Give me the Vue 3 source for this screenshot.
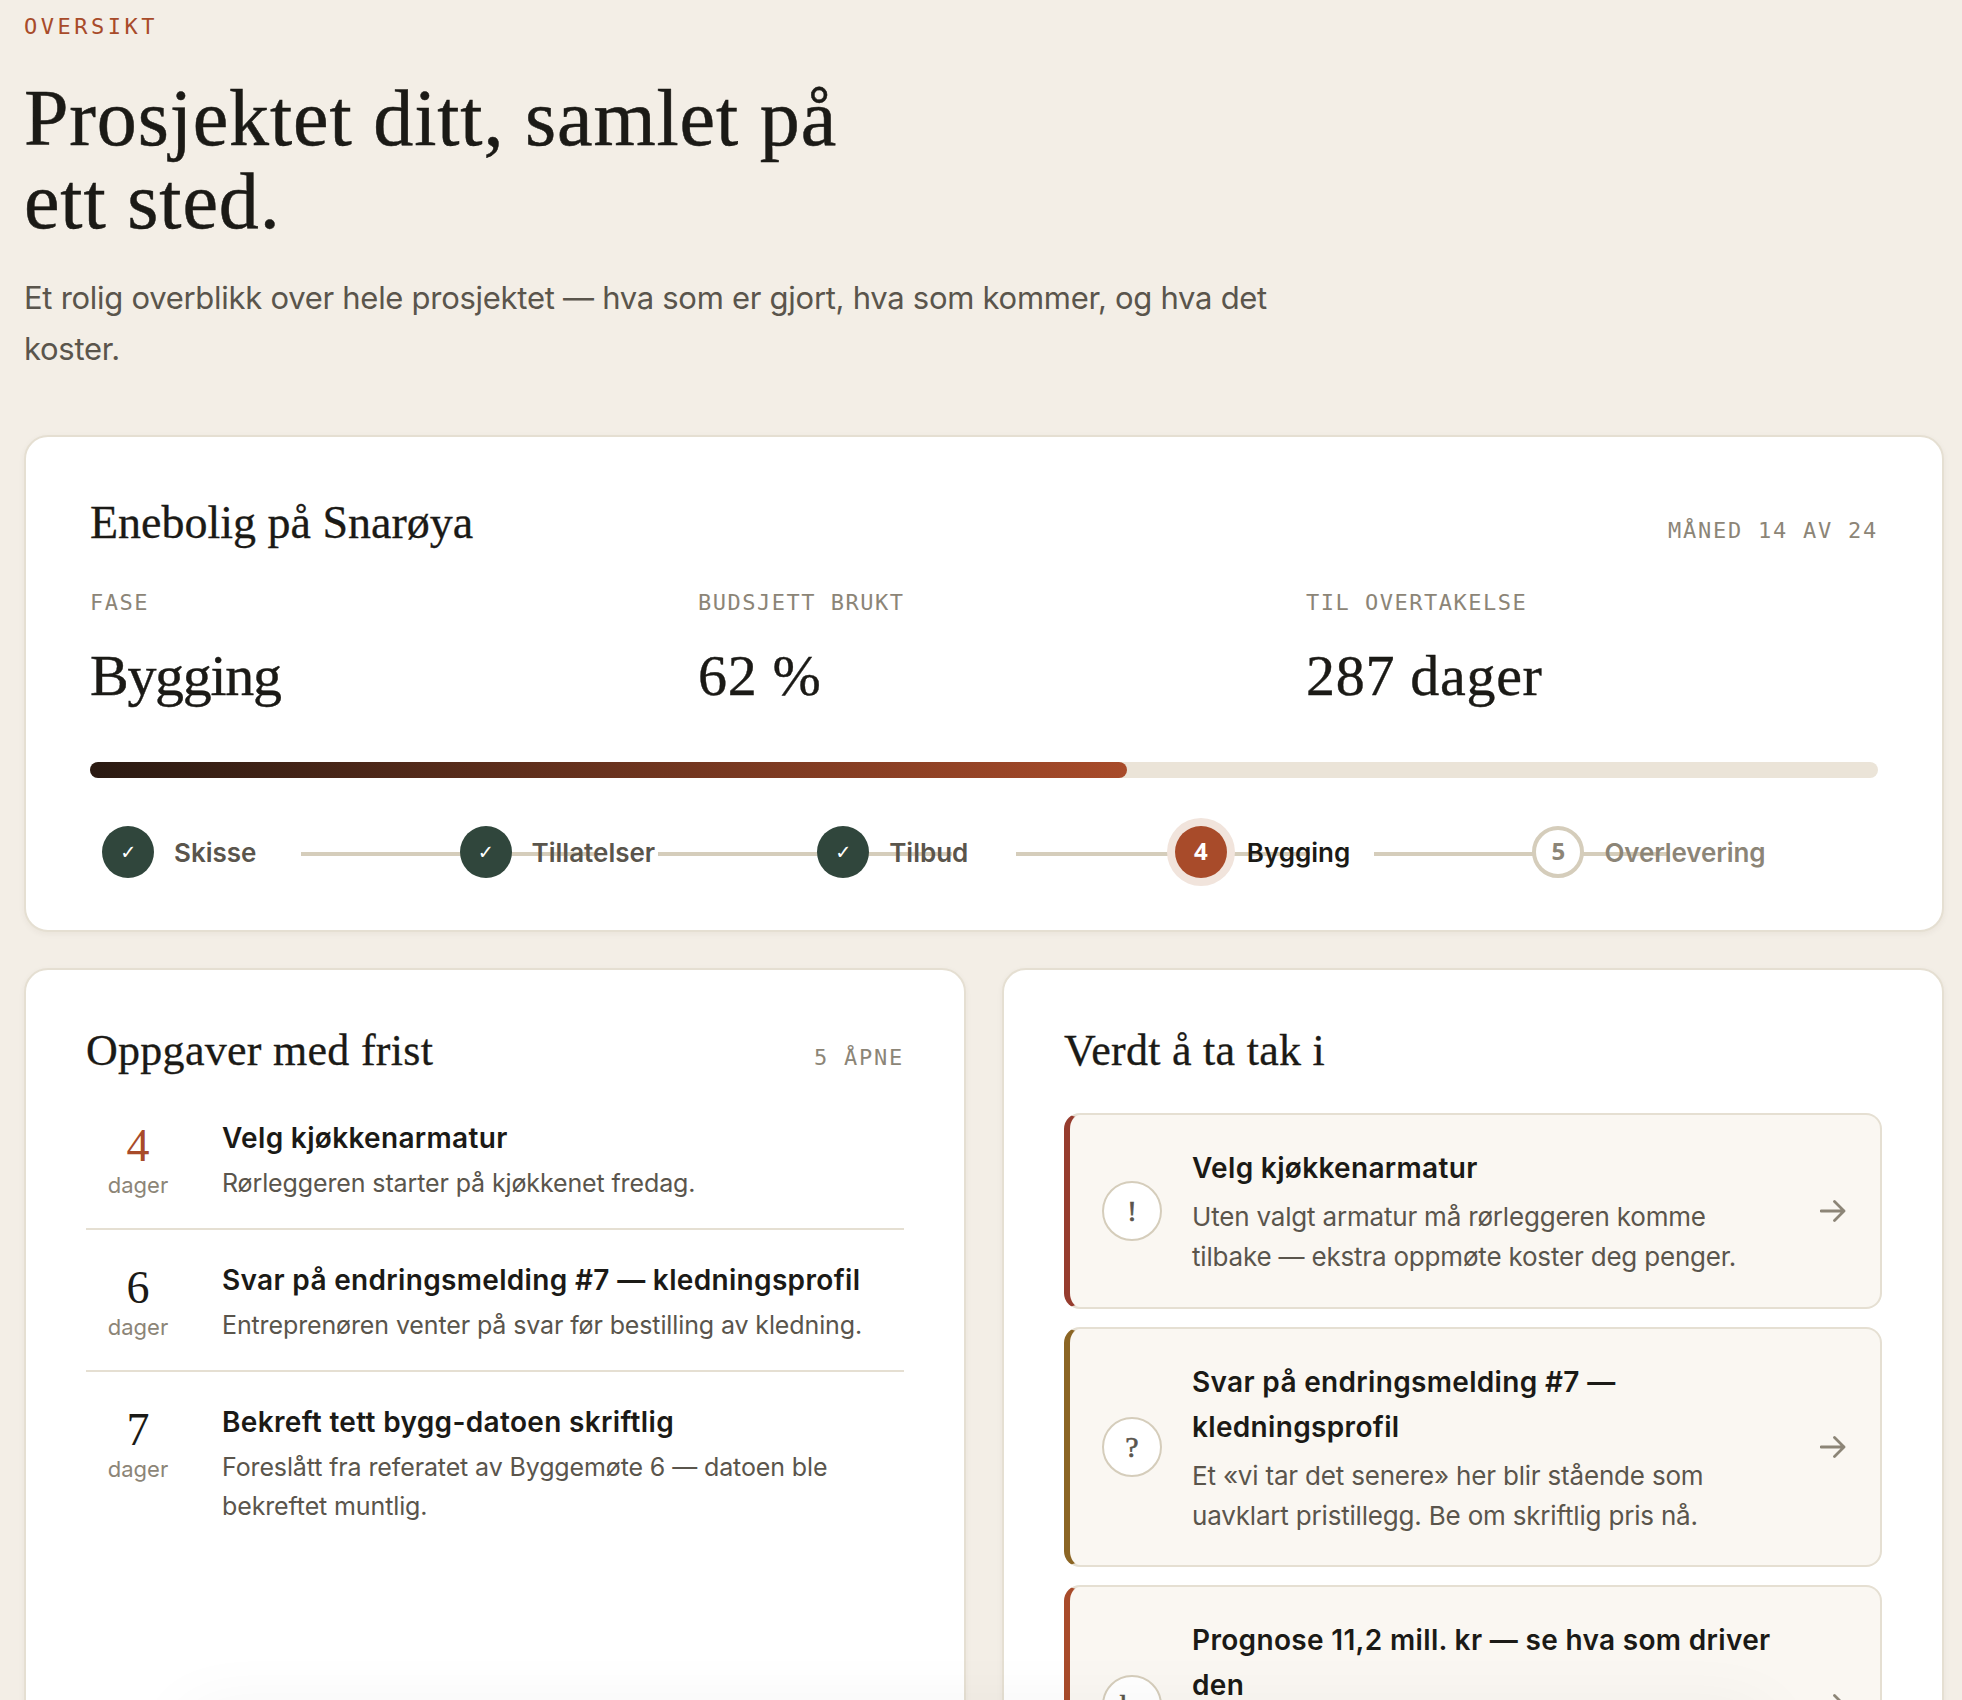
<script setup>
const stats = [
  { label: 'Fase', value: 'Bygging' },
  { label: 'Budsjett brukt', value: '62 %' },
  { label: 'Til overtakelse', value: '287 dager' },
]

const progress = 58

const steps = [
  { label: 'Skisse', mark: '✓', state: 'done' },
  { label: 'Tillatelser', mark: '✓', state: 'done' },
  { label: 'Tilbud', mark: '✓', state: 'done' },
  { label: 'Bygging', mark: '4', state: 'active' },
  { label: 'Overlevering', mark: '5', state: 'todo' },
]

const tasks = [
  {
    days: 4,
    urgent: true,
    title: 'Velg kjøkkenarmatur',
    text: 'Rørleggeren starter på kjøkkenet fredag.',
  },
  {
    days: 6,
    title: 'Svar på endringsmelding #7 — kledningsprofil',
    text: 'Entreprenøren venter på svar før bestilling av kledning.',
  },
  {
    days: 7,
    title: 'Bekreft tett bygg-datoen skriftlig',
    text: 'Foreslått fra referatet av Byggemøte 6 — datoen ble bekreftet muntlig.',
  },
]

const alerts = [
  {
    icon: '!',
    tone: 'danger',
    title: 'Velg kjøkkenarmatur',
    text: 'Uten valgt armatur må rørleggeren komme tilbake — ekstra oppmøte koster deg penger.',
  },
  {
    icon: '?',
    tone: 'warn',
    title: 'Svar på endringsmelding #7 — kledningsprofil',
    text: 'Et «vi tar det senere» her blir stående som uavklart pristillegg. Be om skriftlig pris nå.',
  },
  {
    icon: 'kr',
    tone: 'accent',
    title: 'Prognose 11,2 mill. kr — se hva som driver den',
    text: '',
  },
]
</script>

<template>
  <main class="page">
    <header class="intro">
      <p class="eyebrow">Oversikt</p>
      <h1 class="intro-title">Prosjektet ditt, samlet på ett sted.</h1>
      <p class="lead">
        Et rolig overblikk over hele prosjektet — hva som er gjort, hva som kommer, og hva det
        koster.
      </p>
    </header>

    <section class="card project">
      <div class="card-head">
        <h2 class="project-title">Enebolig på Snarøya</h2>
        <span class="meta">Måned 14 av 24</span>
      </div>

      <dl class="stats">
        <div v-for="s in stats" :key="s.label" class="stat">
          <dt>{{ s.label }}</dt>
          <dd>{{ s.value }}</dd>
        </div>
      </dl>

      <div class="bar">
        <div class="bar-fill" :style="{ width: progress + '%' }"></div>
      </div>

      <ol class="steps">
        <li v-for="s in steps" :key="s.label" class="step" :class="`step--${s.state}`">
          <span class="step-dot">{{ s.mark }}</span>
          <span class="step-label">{{ s.label }}</span>
        </li>
      </ol>
    </section>

    <div class="columns">
      <section class="card panel">
        <div class="card-head">
          <h2 class="panel-title">Oppgaver med frist</h2>
          <span class="meta">5 åpne</span>
        </div>
        <ul class="tasks">
          <li v-for="t in tasks" :key="t.title" class="task">
            <div class="due" :class="{ 'due--urgent': t.urgent }">
              <span class="due-num">{{ t.days }}</span>
              <span class="due-unit">dager</span>
            </div>
            <div class="task-body">
              <h3 class="item-title">{{ t.title }}</h3>
              <p class="task-text">{{ t.text }}</p>
            </div>
          </li>
        </ul>
      </section>

      <section class="card panel">
        <div class="card-head">
          <h2 class="panel-title">Verdt å ta tak i</h2>
        </div>
        <div class="alerts">
          <a v-for="a in alerts" :key="a.title" class="alert" :class="`alert--${a.tone}`">
            <span class="alert-icon">{{ a.icon }}</span>
            <div class="alert-body">
              <h3 class="item-title">{{ a.title }}</h3>
              <p class="alert-text">{{ a.text }}</p>
            </div>
            <svg class="arrow" viewBox="0 0 28 24" fill="none">
              <path
                d="M1 12H24M14.5 2.5L24 12L14.5 21.5"
                stroke="currentColor"
                stroke-width="2.8"
                stroke-linecap="round"
                stroke-linejoin="round"
              />
            </svg>
          </a>
        </div>
      </section>
    </div>
  </main>
</template>

<style>
body {
  margin: 0;
  background: #f3eee6;
}
</style>

<style scoped>
.page {
  --ink: #1b1a16;
  --ink-2: #5a554c;
  --ink-3: #8c8577;
  --line: #e5dfd2;
  --line-2: #d5cdbb;
  --accent: #a84b2a;
  --serif: 'Liberation Serif', 'Times New Roman', serif;
  --mono: 'DejaVu Sans Mono', Menlo, monospace;

  position: relative;
  box-sizing: border-box;
  height: 1700px;
  overflow: hidden;
  padding: 0 18px 0 24px;
  font-family: Inter, 'Open Sans', sans-serif;
  color: var(--ink);
  background: #f3eee6;
}

/* soft shade along the bottom edge of the view */
.page::after {
  content: '';
  position: absolute;
  left: 180px;
  right: 190px;
  bottom: -70px;
  height: 60px;
  border-radius: 30px;
  box-shadow: 0 0 70px rgba(40, 30, 15, 0.05);
  pointer-events: none;
}

h1,
h2,
h3,
p,
dl,
dd,
ol,
ul {
  margin: 0;
  padding: 0;
  list-style: none;
}

.intro {
  height: 435px;
}

.eyebrow {
  padding-top: 10px;
  font: 22px/34px var(--mono);
  letter-spacing: 3.5px;
  text-transform: uppercase;
  color: var(--accent);
}

.intro-title {
  max-width: 860px;
  margin-top: 33px;
  font: 400 80px/83px var(--serif);
  letter-spacing: 0.85px;
  -webkit-text-stroke: 0.5px currentColor;
}

.lead {
  max-width: 1280px;
  margin-top: 29px;
  font-size: 31px;
  line-height: 51px;
  letter-spacing: -0.28px;
  color: var(--ink-2);
}

.card {
  box-sizing: border-box;
  background: #fff;
  border: 2px solid var(--line);
  border-radius: 24px;
  box-shadow: 0 2px 6px rgba(60, 45, 20, 0.05);
}

.card-head {
  display: flex;
  align-items: baseline;
  justify-content: space-between;
}

.meta {
  font: 22px/34px var(--mono);
  letter-spacing: 0.08em;
  text-transform: uppercase;
  color: var(--ink-3);
}

.project {
  height: 497px;
  padding: 58px 64px 0;
}

.project-title {
  font: 400 46px/56px var(--serif);
  -webkit-text-stroke: 0.3px currentColor;
}

.stats {
  display: grid;
  grid-template-columns: repeat(3, 1fr);
  gap: 36px;
  margin-top: 35px;
}

.stat dt {
  font: 22px/34px var(--mono);
  letter-spacing: 1.5px;
  text-transform: uppercase;
  color: var(--ink-3);
}

.stat dd {
  margin-top: 18px;
  font: 400 58px/76px var(--serif);
  letter-spacing: 0.7px;
  -webkit-text-stroke: 0.4px currentColor;
}

.stat:first-child dd {
  letter-spacing: -1.3px;
}

.bar {
  height: 16px;
  margin-top: 48px;
  border-radius: 8px;
  background: #ebe4d8;
}

.bar-fill {
  height: 100%;
  border-radius: 8px;
  background: linear-gradient(90deg, #2a1a12, #a84b2a);
}

.steps {
  display: grid;
  grid-template-columns: repeat(5, 1fr);
  margin-top: 48px;
}

.step {
  position: relative;
  display: flex;
  align-items: center;
  gap: 20px;
  padding-left: 12px;
}

/* connector runs from the middle of the previous step to the middle of this one */
.step + .step::before {
  content: '';
  position: absolute;
  top: 26px;
  left: calc(-50% + 32px);
  right: calc(50% + 32px);
  height: 4px;
  background: var(--line-2);
}

.step-dot {
  position: relative;
  box-sizing: border-box;
  display: flex;
  align-items: center;
  justify-content: center;
  width: 52px;
  height: 52px;
  padding-bottom: 3px;
  border-radius: 50%;
  font: 700 24px/1 'Open Sans', 'DejaVu Sans Mono', sans-serif;
}

.step-label {
  position: relative;
  font-size: 26px;
  font-weight: 600;
}

.step--done .step-dot {
  padding-bottom: 0;
  background: #30463c;
  color: #fff;
  font: 700 22px/1 var(--mono);
}

.step--done .step-label {
  color: var(--ink-2);
}

.step--active .step-dot {
  background: var(--accent);
  color: #fff;
  box-shadow: 0 0 0 8px #f1e4dc;
}

.step--todo .step-dot {
  background: #fff;
  border: 4px solid var(--line-2);
  color: var(--ink-3);
}

.step--todo .step-label {
  letter-spacing: -0.1px;
  color: var(--ink-3);
}

.columns {
  display: grid;
  grid-template-columns: 1fr 1fr;
  gap: 36px;
  margin-top: 36px;
}

.panel {
  min-height: 900px;
  padding: 54px 60px;
}

.panel-title {
  font: 400 44px/54px var(--serif);
  letter-spacing: 0.28px;
  -webkit-text-stroke: 0.3px currentColor;
}

.tasks {
  margin-top: 10px;
}

.task {
  display: flex;
  gap: 32px;
  padding: 28px 0 25px;
}

.task + .task {
  border-top: 2px solid var(--line);
}

.due {
  display: flex;
  flex-direction: column;
  align-items: center;
  width: 104px;
  padding-top: 6px;
}

.due-num {
  font: 400 46px/48px var(--serif);
}

.due-unit {
  font-size: 22px;
  line-height: 32px;
  letter-spacing: 0;
  margin-top: -1px;
  color: var(--ink-3);
}

.due--urgent .due-num {
  color: var(--accent);
}

.task-body {
  flex: 1;
}

.item-title {
  font-size: 28px;
  font-weight: 600;
  line-height: 45px;
  letter-spacing: 0.33px;
}

.task-text {
  margin-top: 3px;
  font-size: 25px;
  line-height: 39px;
  letter-spacing: -0.12px;
  color: var(--ink-2);
}

.alerts {
  display: flex;
  flex-direction: column;
  gap: 18px;
  margin-top: 35px;
}

.alert {
  display: flex;
  align-items: center;
  gap: 30px;
  padding: 30px 32px;
  background: #faf7f2;
  border: 2px solid var(--line);
  border-left-width: 6px;
  border-radius: 16px;
}

.alert--danger {
  border-left-color: #963c2e;
}

.alert--warn {
  border-left-color: #8b6524;
}

.alert--accent {
  border-left-color: var(--accent);
}

.alert-icon {
  box-sizing: border-box;
  flex: none;
  display: flex;
  align-items: center;
  justify-content: center;
  width: 60px;
  height: 60px;
  border: 2px solid var(--line-2);
  border-radius: 50%;
  background: #fff;
  font: 400 30px/1 var(--serif);
  -webkit-text-stroke: 0.6px currentColor;
  color: var(--ink-2);
}

.alert-body {
  flex: 1;
  padding-top: 1px;
  margin-bottom: -1px;
}

.alert-text {
  min-height: 80.6px;
  margin-top: 6px;
  font-size: 26px;
  line-height: 40.3px;
  letter-spacing: -0.19px;
  color: var(--ink-2);
}

.arrow {
  flex: none;
  width: 28px;
  height: 24px;
  color: var(--ink-3);
}
</style>
